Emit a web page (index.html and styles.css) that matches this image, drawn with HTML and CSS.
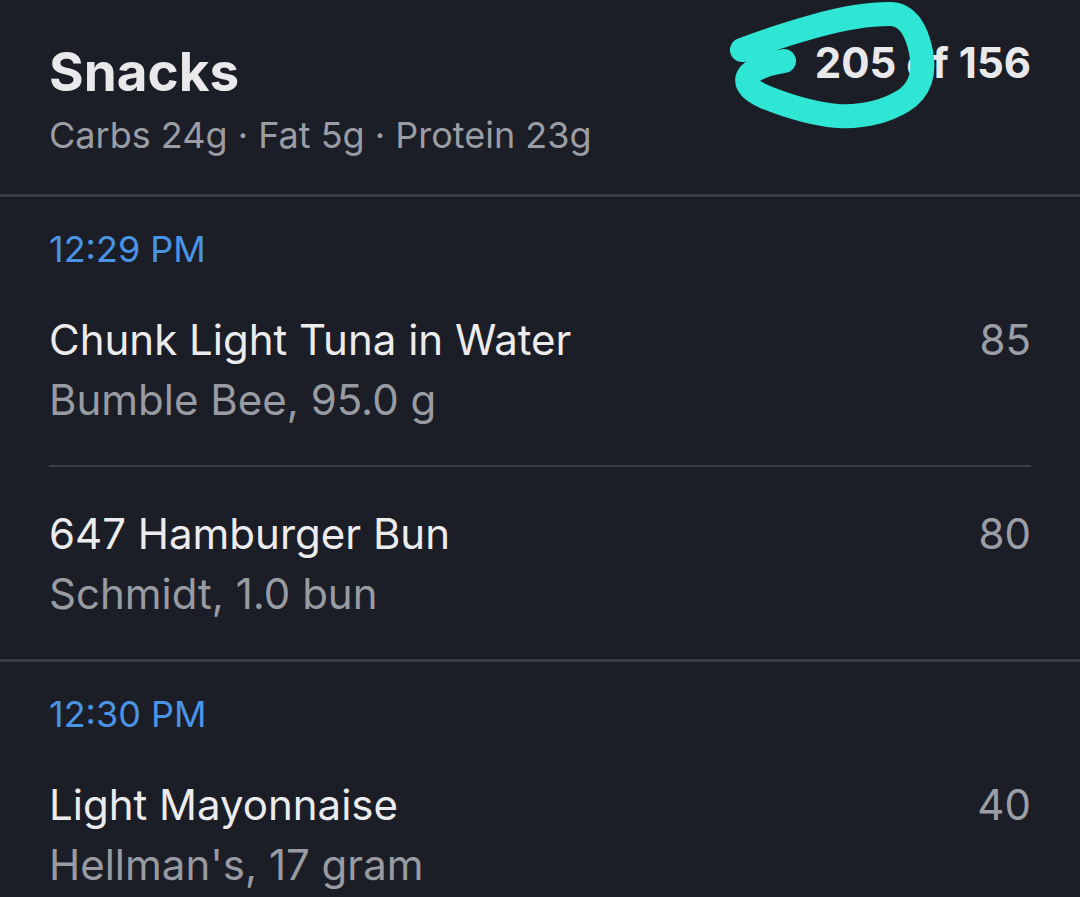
FILE: index.html
```html
<!DOCTYPE html>
<html lang="en">
<head>
  <meta charset="UTF-8" />
  <title>Snacks</title>
  <link rel="stylesheet" href="styles.css">
</head>
<body>
  <div class="meal">
    <div class="meal-header">
      <div class="meal-info">
        <h2 class="meal-title">Snacks</h2>
        <div class="meal-macros">Carbs 24g · Fat 5g · Protein 23g</div>
      </div>
      <div class="meal-total">205 of 156</div>
    </div>

    <div class="time-group">
      <div class="time">12:29 PM</div>
      <div class="entry">
        <div class="entry-text">
          <div class="entry-name">Chunk Light Tuna in Water</div>
          <div class="entry-detail">Bumble Bee, 95.0 g</div>
        </div>
        <div class="entry-cal">85</div>
      </div>
      <div class="entry">
        <div class="entry-text">
          <div class="entry-name">647 Hamburger Bun</div>
          <div class="entry-detail">Schmidt, 1.0 bun</div>
        </div>
        <div class="entry-cal">80</div>
      </div>
    </div>

    <div class="time-group">
      <div class="time">12:30 PM</div>
      <div class="entry">
        <div class="entry-text">
          <div class="entry-name">Light Mayonnaise</div>
          <div class="entry-detail">Hellman's, 17 gram</div>
        </div>
        <div class="entry-cal">40</div>
      </div>
    </div>
  </div>

  <!-- hand-drawn highlight over the total -->
  <svg class="scribble" width="1080" height="140" viewBox="0 0 1080 140">
    <path d="M742,50 C765,41 790,33 815,26 C840,19 865,14 890,14 C908,14 917,32 921,52 C925,72 921,90 903,101 C883,113 860,117 838,116 C812,114 785,105 765,97 C748,90 742,80 752,72 C760,66 772,63 784,61"
          fill="none" stroke="#2ee6d3" stroke-width="24" stroke-linecap="round" stroke-linejoin="round"/>
  </svg>
</body>
</html>
```

FILE: styles.css
```css
html, body {
  margin: 0;
  background: #1c1e27;
}
body {
  font-family: Inter, "Noto Sans", sans-serif;
  color: #ececee;
  position: relative;
  height: 897px;
  overflow: hidden;
}
.meal-header {
  display: flex;
  justify-content: space-between;
  align-items: flex-start;
  padding: 40px 49px 31px 49px;
  border-bottom: 3px solid #383b46;
}
.meal-title {
  margin: 0;
  font-size: 53px;
  line-height: 64px;
  font-weight: 700;
  color: #e9e9eb;
}
.meal-macros {
  margin-top: 3px;
  font-size: 36px;
  line-height: 56px;
  color: #9b9da4;
}
.meal-total {
  font-size: 42px;
  line-height: 46px;
  font-weight: 700;
  color: #e9e9eb;
}
.time-group {
  padding: 32px 49px 0 49px;
  border-bottom: 3px solid #383b46;
}
.time {
  font-size: 36px;
  line-height: 40px;
  color: #4a94e6;
  margin-bottom: 4px;
}
.entry {
  display: flex;
  justify-content: space-between;
  align-items: flex-start;
  padding: 41px 0 39px;
}
.entry + .entry {
  border-top: 2px solid #393c47;
}
.entry-name {
  font-size: 42px;
  line-height: 52px;
}
.entry-detail {
  margin-top: 8px;
  font-size: 42px;
  line-height: 52px;
  color: #999ba2;
}
.entry-cal {
  font-size: 42px;
  line-height: 52px;
  color: #9c9ea5;
}
.scribble {
  position: absolute;
  left: 0;
  top: 0;
}
```
